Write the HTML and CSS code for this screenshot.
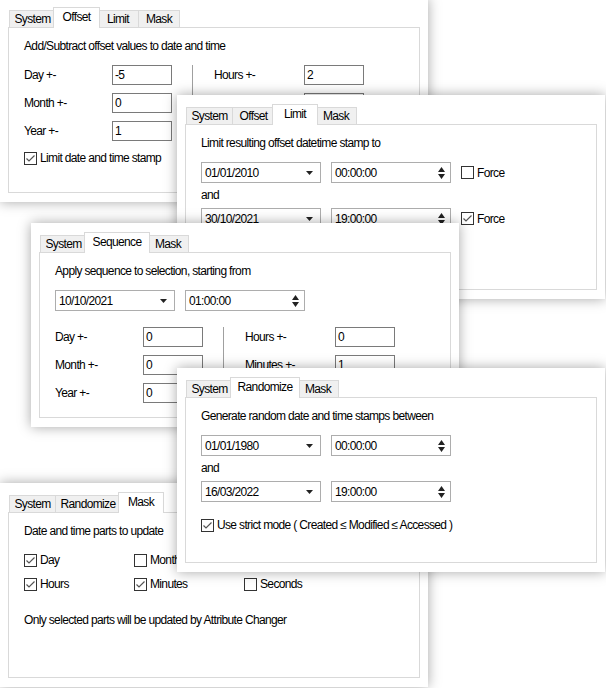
FILE: index.html
```html
<!DOCTYPE html>
<html>

<head>
    <title>Attribute Changer - Date and time</title>
    <link rel="stylesheet" href="styles.css">
</head>

<body>
    <div class="desk">

        <!-- Offset -->
        <div class="win win-offset">
            <div class="tabs">
                <div class="tab t-sys">System</div>
                <div class="tab t-off active">Offset</div>
                <div class="tab t-lim">Limit</div>
                <div class="tab t-mask">Mask</div>
            </div>
            <div class="page">
                <div class="caption">Add/Subtract offset values to date and time</div>
                <div class="fields">
                    <div class="col">
                        <div class="field"><span class="lbl">Day +-</span><span class="edit">-5</span></div>
                        <div class="field"><span class="lbl">Month +-</span><span class="edit">0</span></div>
                        <div class="field"><span class="lbl">Year +-</span><span class="edit">1</span></div>
                    </div>
                    <div class="sep"></div>
                    <div class="col right">
                        <div class="field"><span class="lbl">Hours +-</span><span class="edit">2</span></div>
                        <div class="field"><span class="lbl">Minutes +-</span><span class="edit">0</span></div>
                        <div class="field"><span class="lbl">Seconds +-</span><span class="edit">0</span></div>
                    </div>
                </div>
                <div class="check">
                    <span class="box"><svg width="11" height="11" viewBox="0 0 11 11"><path d="M1.5 5.5l2.5 2.5 5.5-5.5" /></svg></span>
                    Limit date and time stamp
                </div>
            </div>
        </div>

        <!-- Limit -->
        <div class="win win-limit">
            <div class="tabs">
                <div class="tab t-sys">System</div>
                <div class="tab t-off">Offset</div>
                <div class="tab t-lim active">Limit</div>
                <div class="tab t-mask">Mask</div>
            </div>
            <div class="page">
                <div class="caption">Limit resulting offset datetime stamp to</div>
                <div class="dt-row">
                    <div class="combo"><span>01/01/2010</span><svg class="drop" width="7" height="4" viewBox="0 0 7 4"><path d="M0 0h7L3.5 4z" /></svg></div>
                    <div class="combo spin"><span>00:00:00</span><svg class="spinner" width="7" height="12" viewBox="0 0 7 12"><path d="M3.5 0L7 5H0z M0 7h7L3.5 12z" /></svg></div>
                    <div class="check">
                        <span class="box empty"></span>
                        Force
                    </div>
                </div>
                <div class="and">and</div>
                <div class="dt-row">
                    <div class="combo"><span>30/10/2021</span><svg class="drop" width="7" height="4" viewBox="0 0 7 4"><path d="M0 0h7L3.5 4z" /></svg></div>
                    <div class="combo spin"><span>19:00:00</span><svg class="spinner" width="7" height="12" viewBox="0 0 7 12"><path d="M3.5 0L7 5H0z M0 7h7L3.5 12z" /></svg></div>
                    <div class="check">
                        <span class="box"><svg width="11" height="11" viewBox="0 0 11 11"><path d="M1.5 5.5l2.5 2.5 5.5-5.5" /></svg></span>
                        Force
                    </div>
                </div>
            </div>
        </div>

        <!-- Sequence -->
        <div class="win win-seq">
            <div class="tabs">
                <div class="tab t-sys">System</div>
                <div class="tab t-seq active">Sequence</div>
                <div class="tab t-mask">Mask</div>
            </div>
            <div class="page">
                <div class="caption">Apply sequence to selection, starting from</div>
                <div class="dt-row">
                    <div class="combo"><span>10/10/2021</span><svg class="drop" width="7" height="4" viewBox="0 0 7 4"><path d="M0 0h7L3.5 4z" /></svg></div>
                    <div class="combo spin"><span>01:00:00</span><svg class="spinner" width="7" height="12" viewBox="0 0 7 12"><path d="M3.5 0L7 5H0z M0 7h7L3.5 12z" /></svg></div>
                </div>
                <div class="fields">
                    <div class="col">
                        <div class="field"><span class="lbl">Day +-</span><span class="edit">0</span></div>
                        <div class="field"><span class="lbl">Month +-</span><span class="edit">0</span></div>
                        <div class="field"><span class="lbl">Year +-</span><span class="edit">0</span></div>
                    </div>
                    <div class="sep"></div>
                    <div class="col right">
                        <div class="field"><span class="lbl">Hours +-</span><span class="edit">0</span></div>
                        <div class="field"><span class="lbl">Minutes +-</span><span class="edit">1</span></div>
                        <div class="field"><span class="lbl">Seconds +-</span><span class="edit">0</span></div>
                    </div>
                </div>
            </div>
        </div>

        <!-- Mask -->
        <div class="win win-mask">
            <div class="tabs">
                <div class="tab t-sys">System</div>
                <div class="tab t-rnd">Randomize</div>
                <div class="tab t-mask active">Mask</div>
            </div>
            <div class="page">
                <div class="caption">Date and time parts to update</div>
                <div class="mask-grid">
                    <div class="check"><span class="box"><svg width="11" height="11" viewBox="0 0 11 11"><path d="M1.5 5.5l2.5 2.5 5.5-5.5" /></svg></span>Day</div>
                    <div class="check"><span class="box empty"></span>Month</div>
                    <div class="check"><span class="box empty"></span>Year</div>
                    <div class="check"><span class="box"><svg width="11" height="11" viewBox="0 0 11 11"><path d="M1.5 5.5l2.5 2.5 5.5-5.5" /></svg></span>Hours</div>
                    <div class="check"><span class="box"><svg width="11" height="11" viewBox="0 0 11 11"><path d="M1.5 5.5l2.5 2.5 5.5-5.5" /></svg></span>Minutes</div>
                    <div class="check"><span class="box empty"></span>Seconds</div>
                </div>
                <div class="note">Only selected parts will be updated by Attribute Changer</div>
            </div>
        </div>

        <!-- Randomize -->
        <div class="win win-rnd">
            <div class="tabs">
                <div class="tab t-sys">System</div>
                <div class="tab t-rnd active">Randomize</div>
                <div class="tab t-mask">Mask</div>
            </div>
            <div class="page">
                <div class="caption">Generate random date and time stamps between</div>
                <div class="dt-row">
                    <div class="combo"><span>01/01/1980</span><svg class="drop" width="7" height="4" viewBox="0 0 7 4"><path d="M0 0h7L3.5 4z" /></svg></div>
                    <div class="combo spin"><span>00:00:00</span><svg class="spinner" width="7" height="12" viewBox="0 0 7 12"><path d="M3.5 0L7 5H0z M0 7h7L3.5 12z" /></svg></div>
                </div>
                <div class="and">and</div>
                <div class="dt-row">
                    <div class="combo"><span>16/03/2022</span><svg class="drop" width="7" height="4" viewBox="0 0 7 4"><path d="M0 0h7L3.5 4z" /></svg></div>
                    <div class="combo spin"><span>19:00:00</span><svg class="spinner" width="7" height="12" viewBox="0 0 7 12"><path d="M3.5 0L7 5H0z M0 7h7L3.5 12z" /></svg></div>
                </div>
                <div class="check strict">
                    <span class="box"><svg width="11" height="11" viewBox="0 0 11 11"><path d="M1.5 5.5l2.5 2.5 5.5-5.5" /></svg></span>
                    Use strict mode ( Created ≤ Modified ≤ Accessed )
                </div>
            </div>
        </div>

    </div>
</body>

</html>
```

FILE: styles.css
```css
body {
    margin: 0;
    background: #fff;
    font-family: "Liberation Sans", Arial, sans-serif;
    font-size: 12px;
    letter-spacing: -0.65px;
    color: #000;
}

.desk {
    position: relative;
    width: 606px;
    height: 688px;
    overflow: hidden;
}

/* windows scattered on the canvas */
.win {
    position: absolute;
    width: 428px;
    box-sizing: border-box;
    padding: 9px 8px;
    background: #fff;
    box-shadow: 0 0 12px rgba(0, 0, 0, 0.35);
}

.win-offset { left: 0; top: -2px; z-index: 1; }
.win-limit  { left: 177px; top: 95px; z-index: 2; }
.win-seq    { left: 31px; top: 223px; z-index: 3; }
.win-mask   { left: 0; top: 483px; z-index: 4; }
.win-rnd    { left: 177px; top: 368px; z-index: 5; }

/* tab strip */
.tabs {
    display: flex;
    align-items: flex-end;
    height: 20px;
    padding-left: 1px;
}

.tab {
    position: relative;
    height: 16px;
    line-height: 16px;
    border: 1px solid #d9d9d9;
    border-bottom: none;
    background: #f0f0f0;
    text-align: center;
}

.tab + .tab {
    margin-left: -1px;
}

.tab.active {
    z-index: 2;
    height: 19px;
    padding: 1px 2px 0;
    margin: 0 -2px -1px;
    background: #fff;
}

.tab + .tab.active {
    margin-left: -3px;
}

.t-sys  { width: 45px; }
.t-off  { width: 41px; }
.t-lim  { width: 40px; }
.t-mask { width: 40px; }
.t-seq  { width: 60px; }
.t-rnd  { width: 64px; }

.page {
    position: relative;
    height: 166px;
    box-sizing: border-box;
    border: 1px solid #d9d9d9;
    padding: 10px 15px;
}

.caption,
.and,
.note {
    line-height: 16px;
}

/* offset style fields */
.fields {
    display: flex;
    margin-top: 11px;
}

.dt-row + .fields {
    margin-top: 16px;
}

.col {
    display: flex;
    flex-direction: column;
    gap: 8px;
}

.field {
    display: flex;
    align-items: center;
    height: 20px;
}

.lbl {
    width: 88px;
}

.right .lbl {
    width: 90px;
}

.edit {
    width: 60px;
    height: 20px;
    box-sizing: border-box;
    border: 1px solid #7a7a7a;
    padding-left: 2px;
    line-height: 18px;
}

.sep {
    width: 1px;
    background: #a0a0a0;
    margin: 0 21px 0 20px;
}

/* date / time pickers */
.dt-row {
    display: flex;
    align-items: center;
    gap: 10px;
    margin-top: 11px;
}

.and {
    margin: 4px 0 5px;
}

.and + .dt-row {
    margin-top: 0;
}

.combo {
    display: flex;
    align-items: center;
    justify-content: space-between;
    width: 120px;
    height: 21px;
    box-sizing: border-box;
    border: 1px solid #adadad;
    padding: 0 7px 0 3px;
}

.combo.spin {
    padding-right: 5px;
}

.combo svg {
    fill: #222;
}

/* checkboxes */
.check {
    display: flex;
    align-items: center;
    height: 14px;
    line-height: 14px;
}

.fields + .check {
    margin-top: 10px;
}

.box {
    display: flex;
    align-items: center;
    justify-content: center;
    width: 13px;
    height: 13px;
    box-sizing: border-box;
    border: 1px solid #333;
    margin-right: 3px;
    background: #fff;
}

.box path {
    fill: none;
    stroke: #555;
    stroke-width: 1.2;
}

.strict {
    margin-top: 16px;
}

.mask-grid {
    display: grid;
    grid-template-columns: repeat(3, 110px);
    row-gap: 10px;
    margin-top: 14px;
}

.note {
    margin-top: 21px;
}
```
